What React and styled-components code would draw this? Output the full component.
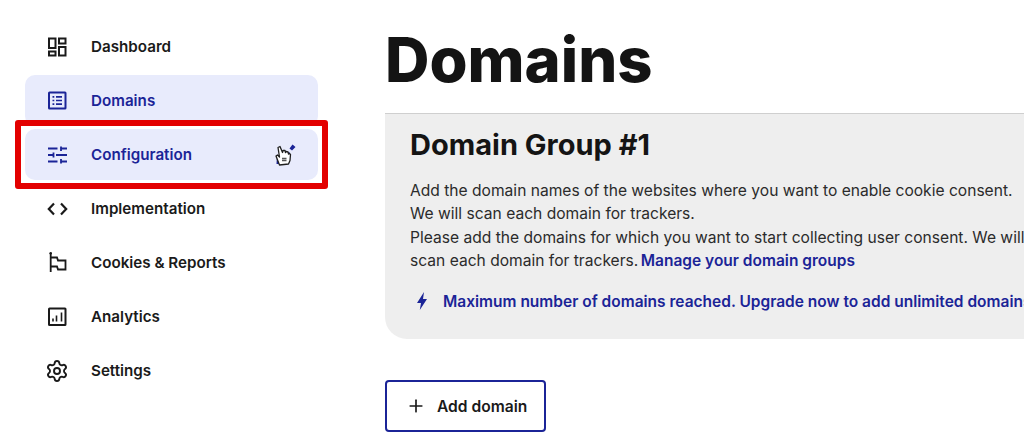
import React from 'react';
import styled, { createGlobalStyle } from 'styled-components';
import { Plus, Settings } from 'lucide-react';

const GlobalStyle = createGlobalStyle`
  html, body {
    margin: 0;
    padding: 0;
    background: #ffffff;
    overflow: hidden;
  }
  * {
    box-sizing: border-box;
  }
`;

const BLUE = '#1b2497';
const INK = '#1a1a1a';

const Page = styled.div`
  display: flex;
  width: 1024px;
  height: 441px;
  overflow: hidden;
  font-family: Inter, "Liberation Sans", sans-serif;
  color: ${INK};
`;

const Sidebar = styled.nav`
  flex: 0 0 385px;
  display: flex;
  flex-direction: column;
  gap: 3px;
  padding: 21px 0 0 25px;
`;

const NavRow = styled.div`
  position: relative;
  display: flex;
  align-items: center;
  gap: 22px;
  width: 293px;
  height: 51px;
  padding: 0 20px;
  border-radius: 10px;
  font-size: 15.2px;
  font-weight: 600;
  color: ${(p) => (p.$active ? BLUE : INK)};
  background: ${(p) => (p.$active ? '#e8ebfc' : 'transparent')};
`;

const Highlight = styled.div`
  position: absolute;
  inset: -9px -10px;
  border: 6.5px solid #e30000;
  border-radius: 3px;
`;

const Pointer = styled.svg`
  position: absolute;
  left: 249px;
  top: 14px;
`;

const Main = styled.main`
  flex: 1;
  min-width: 0;
  display: flex;
  flex-direction: column;
  align-items: flex-start;
`;

const Title = styled.h1`
  margin: 27px 0 0;
  height: 65px;
  font-size: 61.5px;
  line-height: 65px;
  font-weight: 800;
  color: #141414;
`;

const Panel = styled.section`
  width: 700px;
  height: 226px;
  margin-top: 21px;
  padding: 14px 25px 0;
  background: #eeeeee;
  border-top: 1px solid #cfcfcf;
  border-bottom-left-radius: 22px;
`;

const GroupTitle = styled.h2`
  margin: 0;
  font-size: 29px;
  line-height: 34px;
  font-weight: 700;
  color: #141414;
`;

const Copy = styled.p`
  margin: 17px 0 0;
  width: 640px;
  font-size: 15.6px;
  line-height: 23.4px;
  color: #2b2b2b;
  white-space: nowrap;
`;

const BlueLink = styled.span`
  margin-left: -2px;
  font-size: 15.5px;
  font-weight: 600;
  color: ${BLUE};
`;

const Notice = styled.div`
  display: flex;
  align-items: center;
  gap: 16px;
  margin-top: 17px;
  padding-left: 7px;
  font-size: 15.5px;
  line-height: 23px;
  font-weight: 600;
  color: ${BLUE};
  white-space: nowrap;
`;

const AddButton = styled.button`
  display: flex;
  align-items: center;
  gap: 11px;
  width: 161px;
  height: 52px;
  margin-top: 41px;
  padding: 0 0 0 19px;
  background: #ffffff;
  border: 2px solid ${BLUE};
  border-radius: 4px;
  font-family: inherit;
  font-size: 15.6px;
  font-weight: 600;
  color: ${INK};
`;

const Icon = ({ children, width = 2 }) => (
  <svg width="24" height="24" viewBox="0 0 24 24" fill="none" stroke="currentColor" strokeWidth={width}>
    {children}
  </svg>
);

const DashboardIcon = () => (
  <Icon>
    <rect x="4" y="3.500" width="6.500" height="9.500" />
    <rect x="14" y="3.500" width="6.500" height="5" />
    <rect x="4" y="16.500" width="6.500" height="4" />
    <rect x="14" y="12" width="6.500" height="8.500" />
  </Icon>
);

const DomainsIcon = () => (
  <Icon>
    <rect x="4" y="3.500" width="16.500" height="16" rx="0.500" />
    <path d="M7.500 7.800h1.800M7.500 11.500h1.800M7.500 15.200h1.800M11 7.800h6M11 11.500h6M11 15.200h6" strokeWidth="1.700" />
  </Icon>
);

const SlidersIcon = () => (
  <Icon width={1.800}>
    <path d="M3 5.500h9.500M16 3.500v4.500M16 5.500h6M3 12h5M8.500 9.500v5M11 12h11M3 18.500h9.500M16 16v4.500M16 18.500h6" />
  </Icon>
);

const CodeIcon = () => (
  <Icon width={2.200}>
    <path d="M9 6.500 3.800 12 9 17.500M16 6.500 21.200 12 16 17.500" />
  </Icon>
);

const FlagIcon = () => (
  <Icon width={1.800}>
    <path d="M5.700 2.500V21M5.700 6.500H12l1 3h7.500v9H13l-1-3H5.700" />
    <circle cx="5.700" cy="2.300" r="1.300" fill="currentColor" stroke="none" />
  </Icon>
);

const ChartIcon = () => (
  <Icon>
    <rect x="4" y="3.500" width="16.500" height="16.500" rx="0.500" />
    <path d="M8 16.500v-3M11.500 16.500v-6M16.500 16.500v-9" strokeWidth="1.600" />
  </Icon>
);

const BoltIcon = () => (
  <svg width="10" height="18" viewBox="0 0 10 18" fill="currentColor">
    <path d="M7 0 0 11h4L2.800 18 10 7H6z" />
  </svg>
);

const CursorIcon = () => (
  <Pointer width="22" height="24" viewBox="0 0 22 24">
    <path d="M15.500 5.500 18.500 1.500l3 2.500-3.500 3.500zM12 8.500l4 1-3 4zM3 12l9 9H2.500z" fill={BLUE} />
    <path
      d="M5.500 22 2 13l1.500-1 2 2L4 4.500l2-1 2.500 6 .5-2 2 0 .5 2 .5-1 2 .5 .5 2 1-.5 1 1-.5 6-1.500 3.500z"
      fill="#ffffff"
      stroke="#1f1f1f"
      strokeWidth="1.300"
      strokeLinejoin="round"
    />
    <path d="M8 15.500h4.500M8 17.500h4.500" stroke="#555555" strokeWidth="1.300" fill="none" />
  </Pointer>
);

const navItems = [
  { label: 'Dashboard', icon: <DashboardIcon /> },
  { label: 'Domains', icon: <DomainsIcon />, active: true },
  { label: 'Configuration', icon: <SlidersIcon />, active: true, marked: true },
  { label: 'Implementation', icon: <CodeIcon /> },
  { label: 'Cookies & Reports', icon: <FlagIcon /> },
  { label: 'Analytics', icon: <ChartIcon /> },
  { label: 'Settings', icon: <Settings size={24} strokeWidth={1.900} /> },
];

const App = () => {
  return (
    <Page>
      <GlobalStyle />
      <Sidebar>
        {navItems.map((item) => (
          <NavRow key={item.label} $active={item.active}>
            {item.icon}
            {item.label}
            {item.marked && (
              <>
                <Highlight />
                <CursorIcon />
              </>
            )}
          </NavRow>
        ))}
      </Sidebar>
      <Main>
        <Title>Domains</Title>
        <Panel>
          <GroupTitle>Domain Group #1</GroupTitle>
          <Copy>
            Add the domain names of the websites where you want to enable cookie consent.
            <br />
            We will scan each domain for trackers.
            <br />
            Please add the domains for which you want to start collecting user consent. We will
            <br />
            scan each domain for trackers. <BlueLink>Manage your domain groups</BlueLink>
          </Copy>
          <Notice>
            <BoltIcon />
            Maximum number of domains reached. Upgrade now to add unlimited domains
          </Notice>
        </Panel>
        <AddButton>
          <Plus size={20} strokeWidth={2} />
          Add domain
        </AddButton>
      </Main>
    </Page>
  );
};

export default App;
